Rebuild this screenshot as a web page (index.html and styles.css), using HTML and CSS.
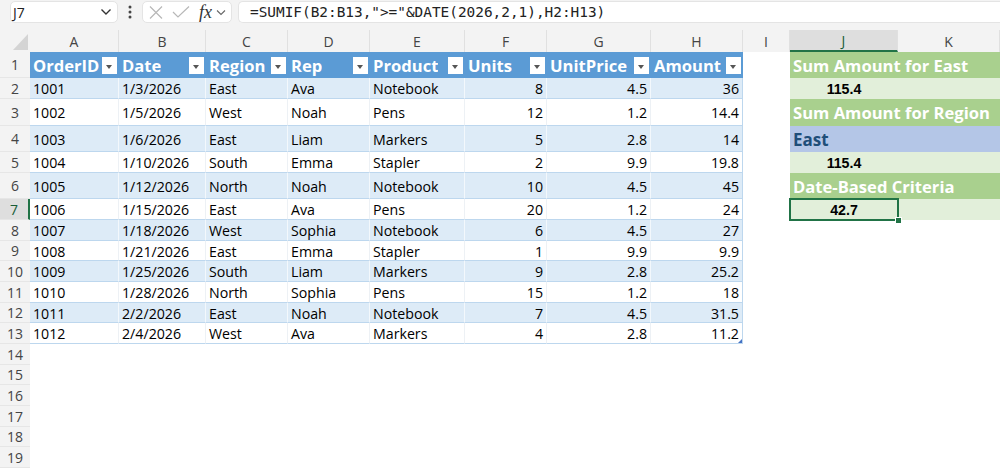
FILE: index.html
```html
<!DOCTYPE html>
<html lang="en">
<head>
<meta charset="utf-8">
<title>Sheet</title>
<link rel="stylesheet" href="styles.css">
</head>
<body>
<div class="app">
  <div class="fbar">
    <div class="namebox">
      <span class="nb-text">J7</span>
      <svg class="chev" width="12" height="8" viewBox="0 0 12 8"><polyline points="1.5,1.5 6,6 10.5,1.5" fill="none" stroke="#333" stroke-width="1.4"/></svg>
    </div>
    <div class="dots">
      <svg width="4" height="14" viewBox="0 0 4 14"><circle cx="2" cy="2" r="1.5" fill="#444"/><circle cx="2" cy="7" r="1.5" fill="#444"/><circle cx="2" cy="12" r="1.5" fill="#444"/></svg>
    </div>
    <div class="fxbox">
      <svg class="ico-x" width="14" height="13" viewBox="0 0 14 13"><path d="M1 0.5 L13 12.5 M13 0.5 L1 12.5" stroke="#b8b8b8" stroke-width="1.2" fill="none"/></svg>
      <svg class="ico-ok" width="18" height="12" viewBox="0 0 18 12"><polyline points="1,6 6,11 17,0.5" fill="none" stroke="#b8b8b8" stroke-width="1.2"/></svg>
      <span class="fx">fx</span>
      <svg class="chev-s" width="10" height="7" viewBox="0 0 10 7"><polyline points="1,1.5 5,5.5 9,1.5" fill="none" stroke="#666" stroke-width="1.1"/></svg>
    </div>
    <div class="formula">=SUMIF(B2:B13,"&gt;="&amp;DATE(2026,2,1),H2:H13)</div>
  </div>

  <div class="sheet">
    <div class="r colhdr">
      <div class="corner"><svg width="30" height="22" viewBox="0 0 30 22"><polygon points="13,20 28,4 28,20" fill="#d4d4d4"/></svg></div>
      <div class="ch">A</div><div class="ch">B</div><div class="ch">C</div><div class="ch">D</div><div class="ch">E</div><div class="ch">F</div><div class="ch">G</div><div class="ch">H</div><div class="ch">I</div><div class="ch act">J</div><div class="ch">K</div>
    </div>

    <div class="r h26">
      <div class="rh">1</div>
      <div class="c th"><span class="tt">OrderID</span><span class="fb"></span></div>
      <div class="c th"><span class="tt">Date</span><span class="fb"></span></div>
      <div class="c th"><span class="tt">Region</span><span class="fb"></span></div>
      <div class="c th"><span class="tt">Rep</span><span class="fb"></span></div>
      <div class="c th"><span class="tt">Product</span><span class="fb"></span></div>
      <div class="c th"><span class="tt">Units</span><span class="fb"></span></div>
      <div class="c th"><span class="tt">UnitPrice</span><span class="fb"></span></div>
      <div class="c th"><span class="tt">Amount</span><span class="fb"></span></div>
      <div class="c"></div>
      <div class="c g span2">Sum Amount for East</div>
    </div>

    <div class="r h21 band">
      <div class="rh">2</div>
      <div class="c t">1001</div><div class="c t">1/3/2026</div><div class="c t">East</div><div class="c t">Ava</div><div class="c t">Notebook</div><div class="c t n">8</div><div class="c t n">4.5</div><div class="c t n">36</div>
      <div class="c"></div>
      <div class="c lg v">115.4</div><div class="c lg"></div>
    </div>

    <div class="r h27">
      <div class="rh">3</div>
      <div class="c t">1002</div><div class="c t">1/5/2026</div><div class="c t">West</div><div class="c t">Noah</div><div class="c t">Pens</div><div class="c t n">12</div><div class="c t n">1.2</div><div class="c t n">14.4</div>
      <div class="c"></div>
      <div class="c g span2">Sum Amount for Region</div>
    </div>

    <div class="r h26 band">
      <div class="rh">4</div>
      <div class="c t">1003</div><div class="c t">1/6/2026</div><div class="c t">East</div><div class="c t">Liam</div><div class="c t">Markers</div><div class="c t n">5</div><div class="c t n">2.8</div><div class="c t n">14</div>
      <div class="c"></div>
      <div class="c lv span2">East</div>
    </div>

    <div class="r h21">
      <div class="rh">5</div>
      <div class="c t">1004</div><div class="c t">1/10/2026</div><div class="c t">South</div><div class="c t">Emma</div><div class="c t">Stapler</div><div class="c t n">2</div><div class="c t n">9.9</div><div class="c t n">19.8</div>
      <div class="c"></div>
      <div class="c lg v">115.4</div><div class="c lg"></div>
    </div>

    <div class="r h26 band">
      <div class="rh">6</div>
      <div class="c t">1005</div><div class="c t">1/12/2026</div><div class="c t">North</div><div class="c t">Noah</div><div class="c t">Notebook</div><div class="c t n">10</div><div class="c t n">4.5</div><div class="c t n">45</div>
      <div class="c"></div>
      <div class="c g span2">Date-Based Criteria</div>
    </div>

    <div class="r h21">
      <div class="rh act">7</div>
      <div class="c t">1006</div><div class="c t">1/15/2026</div><div class="c t">East</div><div class="c t">Ava</div><div class="c t">Pens</div><div class="c t n">20</div><div class="c t n">1.2</div><div class="c t n">24</div>
      <div class="c"></div>
      <div class="c lg v sel">42.7</div><div class="c lg"></div>
    </div>

    <div class="r h21 band">
      <div class="rh">8</div>
      <div class="c t">1007</div><div class="c t">1/18/2026</div><div class="c t">West</div><div class="c t">Sophia</div><div class="c t">Notebook</div><div class="c t n">6</div><div class="c t n">4.5</div><div class="c t n">27</div>
      <div class="c"></div><div class="c"></div><div class="c"></div>
    </div>

    <div class="r h20">
      <div class="rh">9</div>
      <div class="c t">1008</div><div class="c t">1/21/2026</div><div class="c t">East</div><div class="c t">Emma</div><div class="c t">Stapler</div><div class="c t n">1</div><div class="c t n">9.9</div><div class="c t n">9.9</div>
      <div class="c"></div><div class="c"></div><div class="c"></div>
    </div>

    <div class="r h21 band">
      <div class="rh">10</div>
      <div class="c t">1009</div><div class="c t">1/25/2026</div><div class="c t">South</div><div class="c t">Liam</div><div class="c t">Markers</div><div class="c t n">9</div><div class="c t n">2.8</div><div class="c t n">25.2</div>
      <div class="c"></div><div class="c"></div><div class="c"></div>
    </div>

    <div class="r h21">
      <div class="rh">11</div>
      <div class="c t">1010</div><div class="c t">1/28/2026</div><div class="c t">North</div><div class="c t">Sophia</div><div class="c t">Pens</div><div class="c t n">15</div><div class="c t n">1.2</div><div class="c t n">18</div>
      <div class="c"></div><div class="c"></div><div class="c"></div>
    </div>

    <div class="r h20 band">
      <div class="rh">12</div>
      <div class="c t">1011</div><div class="c t">2/2/2026</div><div class="c t">East</div><div class="c t">Noah</div><div class="c t">Notebook</div><div class="c t n">7</div><div class="c t n">4.5</div><div class="c t n">31.5</div>
      <div class="c"></div><div class="c"></div><div class="c"></div>
    </div>

    <div class="r h21 last">
      <div class="rh">13</div>
      <div class="c t">1012</div><div class="c t">2/4/2026</div><div class="c t">West</div><div class="c t">Ava</div><div class="c t">Markers</div><div class="c t n">4</div><div class="c t n">2.8</div><div class="c t n corner-h">11.2</div>
      <div class="c"></div><div class="c"></div><div class="c"></div>
    </div>

    <div class="r h21"><div class="rh">14</div></div>
    <div class="r h20"><div class="rh">15</div></div>
    <div class="r h21"><div class="rh">16</div></div>
    <div class="r h21"><div class="rh">17</div></div>
    <div class="r h20"><div class="rh">18</div></div>
    <div class="r h21"><div class="rh">19</div></div>
  </div>
</div>
</body>
</html>
```

FILE: styles.css
```css
html, body {
  margin: 0;
  padding: 0;
}
body {
  width: 1000px;
  height: 468px;
  overflow: hidden;
  background: #ffffff;
  font-family: "Open Sans", "Noto Sans", sans-serif;
  color: #000;
}
.app {
  width: 1000px;
  height: 468px;
  overflow: hidden;
}

/* formula bar */
.fbar {
  height: 30px;
  background: #f3f3f3;
  display: flex;
  align-items: flex-start;
  padding-top: 1px;
  box-sizing: border-box;
}
.namebox {
  margin-left: 10px;
  width: 108px;
  height: 22px;
  box-sizing: border-box;
  background: #fff;
  border: 1px solid #e4e4e4;
  border-radius: 5px;
  display: flex;
  align-items: center;
  justify-content: space-between;
  padding: 0 5px 0 2px;
}
.nb-text {
  font-size: 14px;
  color: #222;
}
.dots {
  width: 24px;
  height: 22px;
  display: flex;
  align-items: center;
  justify-content: center;
}
.fxbox {
  width: 90px;
  height: 22px;
  box-sizing: border-box;
  background: #fff;
  border: 1px solid #e4e4e4;
  border-radius: 5px;
  display: flex;
  align-items: center;
  padding-left: 6px;
}
.ico-x { margin-left: 0; }
.ico-ok { margin-left: 9px; }
.fx {
  margin-left: 9px;
  font-family: "Liberation Serif", serif;
  font-style: italic;
  font-size: 18px;
  color: #333;
  line-height: 20px;
}
.chev-s { margin-left: 4px; }
.formula {
  margin-left: 6px;
  flex: 1;
  height: 22px;
  box-sizing: border-box;
  background: #fff;
  border: 1px solid #e4e4e4;
  border-right: none;
  border-radius: 5px 0 0 5px;
  padding-left: 11px;
  font-family: "DejaVu Sans Mono", "Liberation Mono", monospace;
  font-size: 14.4px;
  line-height: 20px;
  color: #222;
  white-space: nowrap;
}

/* sheet grid */
.r {
  display: grid;
  grid-template-columns: 30px 89px 87px 82px 82px 95px 82px 104px 92px 47px 108px 102px;
}
.colhdr { height: 22px; background: #f3f3f3; }
.h26 { height: 26px; }
.h27 { height: 27px; }
.h21 { height: 21px; }
.h20 { height: 20px; }

.corner { height: 22px; }
.ch {
  font-size: 14px;
  color: #444;
  display: flex;
  align-items: center;
  justify-content: center;
  border-right: 1px solid #e0e0e0;
  box-sizing: border-box;
}
.ch.act {
  background: #dedede;
  color: #185c37;
  border-bottom: 2px solid #217346;
}

.rh {
  background: #f3f3f3;
  font-size: 14px;
  color: #444;
  display: flex;
  align-items: center;
  justify-content: center;
  box-sizing: border-box;
  border-bottom: 1px solid #e6e6e6;
}
.rh.act {
  background: #dedede;
  color: #185c37;
  border-right: 2px solid #217346;
}

.c {
  box-sizing: border-box;
  display: flex;
  align-items: center;
  min-width: 0;
  overflow: hidden;
  white-space: nowrap;
  font-size: 14.2px;
  padding: 0 3px;
}

/* table */
.th {
  background: #5b9bd5;
  color: #fff;
  font-weight: 700;
  font-size: 16.6px;
  padding: 0 2px 0 3px;
}
.tt {
  overflow: hidden;
  min-width: 0;
  flex: 0 1 auto;
}
.fb {
  margin-left: auto;
  flex: 0 0 15px;
  width: 15px;
  height: 17px;
  background: #fff;
  position: relative;
}
.fb::after {
  content: "";
  position: absolute;
  left: 4px;
  top: 8px;
  border-left: 3.5px solid transparent;
  border-right: 3.5px solid transparent;
  border-top: 4px solid #555;
}
.t {
  border-bottom: 1px solid #bdd7ee;
  border-right: 1px solid #edf1f5;
  padding-top: 1px;
}
.band .t {
  background: #ddebf7;
  border-right-color: #f3f8fc;
}
.t:nth-child(9) { border-right: 1px solid #bdd7ee; }
.n { justify-content: flex-end; }
.corner-h { position: relative; }
.corner-h::after {
  content: "";
  position: absolute;
  right: 0;
  bottom: 0;
  border-left: 4px solid transparent;
  border-bottom: 4px solid #4472c4;
}

/* right panel */
.span2 { grid-column: span 2; }
.g {
  background: #a9d08e;
  color: #fff;
  font-weight: 700;
  font-size: 16.6px;
}
.lv {
  background: #b4c6e7;
  color: #1f4e79;
  font-weight: 700;
  font-size: 17px;
}
.lg { background: #e2efda; }
.v {
  justify-content: center;
  font-family: "Liberation Sans", Arial, sans-serif;
  font-weight: 700;
  font-size: 14.2px;
  padding-top: 1px;
}
.sel {
  overflow: visible;
  position: relative;
}
.sel::after {
  content: "";
  position: absolute;
  left: -1px;
  top: -1px;
  right: -1px;
  bottom: -1px;
  border: 2px solid #217346;
}
.sel::before {
  content: "";
  position: absolute;
  right: -4px;
  bottom: -4px;
  width: 5px;
  height: 5px;
  background: #217346;
  border: 1px solid #fff;
  z-index: 2;
}
```
